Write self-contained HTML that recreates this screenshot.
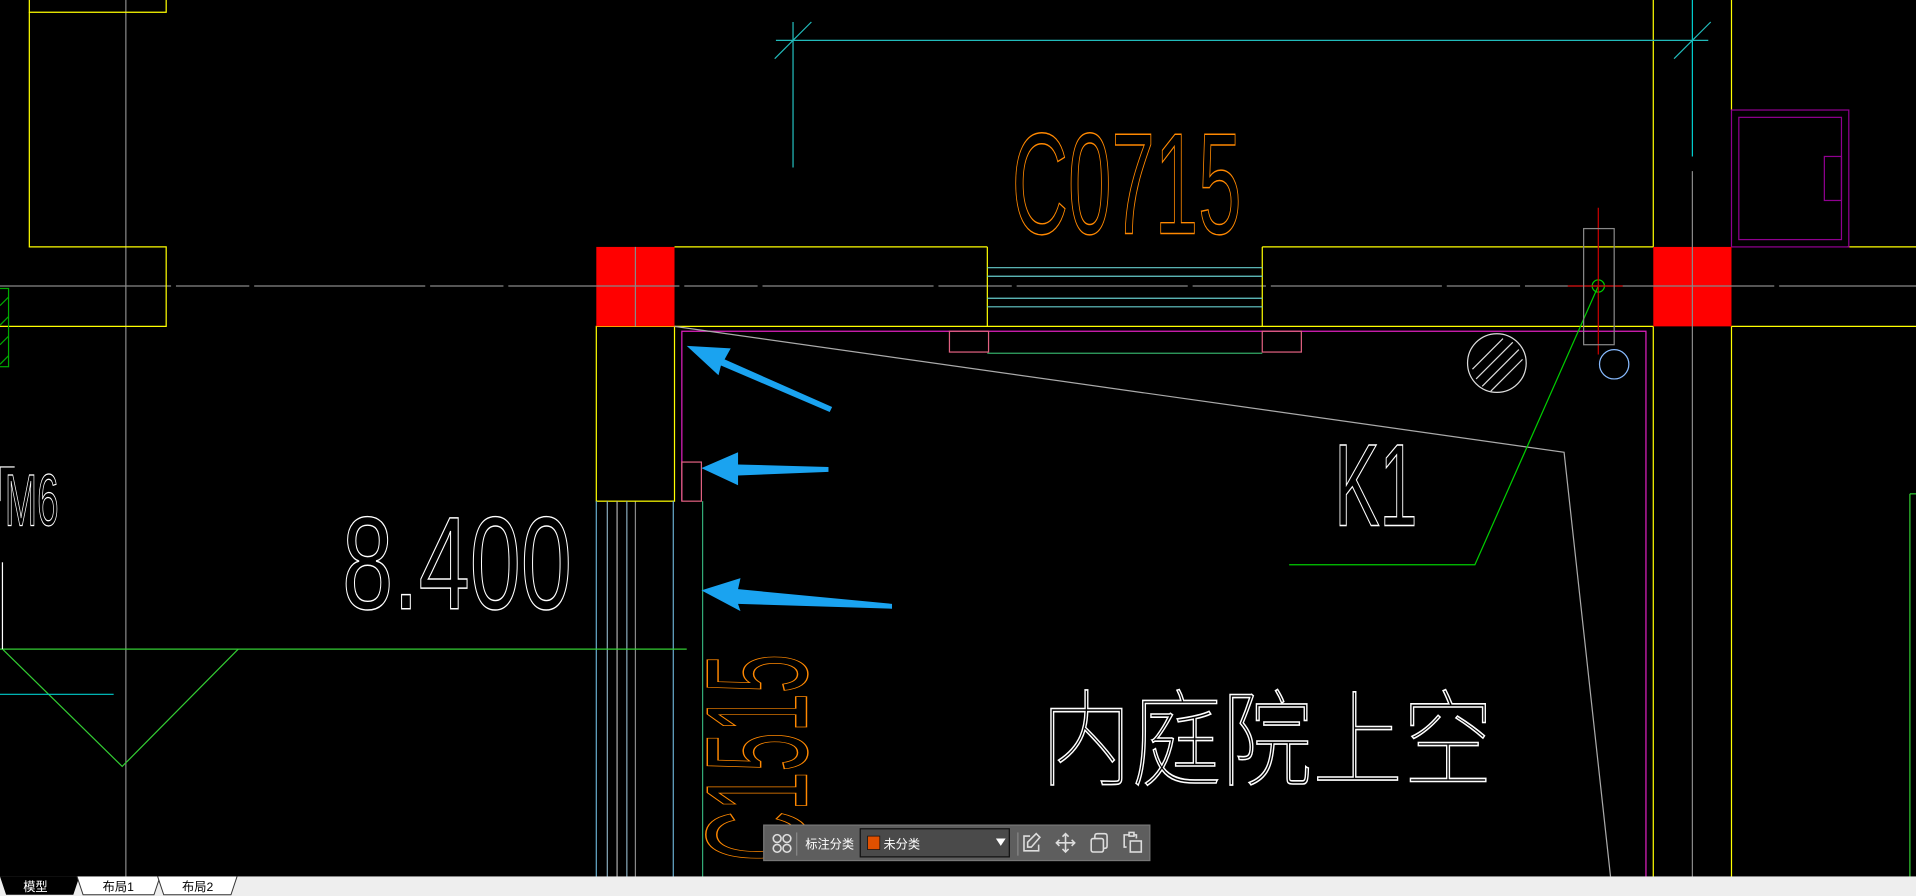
<!DOCTYPE html>
<html><head><meta charset="utf-8"><style>
html,body{margin:0;padding:0;background:#000;width:1916px;height:896px;overflow:hidden}
svg{display:block}
</style></head><body>
<svg width="1916" height="896" viewBox="0 0 1568 733" preserveAspectRatio="none" xmlns="http://www.w3.org/2000/svg">
<rect width="1568" height="733" fill="#000"/>
<g fill="none" stroke-width="1">
<line x1="103" y1="0" x2="103" y2="717" stroke="#888"/>
<line x1="0" y1="234" x2="1568" y2="234" stroke="#888" stroke-dasharray="140,4,60,4"/>
<line x1="520" y1="410" x2="520" y2="717" stroke="#888"/>
<line x1="1385" y1="140" x2="1385" y2="717" stroke="#888"/>
<polyline points="24,0 24,10 136,10 136,0" stroke="#ff0"/>
<polyline points="24,10 24,202 136,202 136,267 0,267" stroke="#ff0"/>
<line x1="552" y1="202" x2="808" y2="202" stroke="#ff0"/>
<line x1="1033" y1="202" x2="1353" y2="202" stroke="#ff0"/>
<line x1="552" y1="267" x2="1353" y2="267" stroke="#ff0"/>
<line x1="808" y1="202" x2="808" y2="267" stroke="#ff0"/>
<line x1="1033" y1="202" x2="1033" y2="267" stroke="#ff0"/>
<line x1="1353" y1="0" x2="1353" y2="202" stroke="#ff0"/>
<line x1="1417" y1="0" x2="1417" y2="90" stroke="#ff0"/>
<line x1="1353" y1="267" x2="1353" y2="717" stroke="#ff0"/>
<line x1="1417" y1="267" x2="1417" y2="717" stroke="#ff0"/>
<line x1="1512" y1="202" x2="1568" y2="202" stroke="#ff0"/>
<line x1="1417" y1="267" x2="1568" y2="267" stroke="#ff0"/>
<rect x="488" y="267" width="64" height="143" stroke="#ff0"/>
<line x1="808" y1="219" x2="1033" y2="219" stroke="#6cc"/>
<line x1="808" y1="226" x2="1033" y2="226" stroke="#6cc"/>
<line x1="808" y1="244" x2="1033" y2="244" stroke="#6cc"/>
<line x1="808" y1="251" x2="1033" y2="251" stroke="#6cc"/>
<line x1="808" y1="289" x2="1033" y2="289" stroke="#3a6"/>
<line x1="649" y1="18" x2="649" y2="137" stroke="#2bb"/>
<line x1="1385" y1="0" x2="1385" y2="128" stroke="#0cc"/>
<line x1="635" y1="33" x2="1398" y2="33" stroke="#2bb"/>
<line x1="634" y1="48" x2="664" y2="18" stroke="#2bb"/>
<line x1="1370" y1="48" x2="1400" y2="18" stroke="#2bb"/>
<polyline points="558,410 558,271 1347,271 1347,717" stroke="#e020c0"/>
<rect x="777" y="271" width="32" height="17" stroke="#e06080"/>
<rect x="1033" y="271" width="32" height="17" stroke="#e06080"/>
<rect x="558" y="378" width="16" height="32" stroke="#e06080"/>
<rect x="1417" y="90" width="96" height="112" stroke="#900090"/>
<rect x="1423" y="96" width="84" height="100" stroke="#900090"/>
<rect x="1493" y="128" width="14" height="36" stroke="#900090"/>
<line x1="488" y1="410" x2="488" y2="717" stroke="#6ac"/>
<line x1="497" y1="410" x2="497" y2="717" stroke="#8ab"/>
<line x1="505" y1="410" x2="505" y2="717" stroke="#aaa"/>
<line x1="513" y1="410" x2="513" y2="717" stroke="#8ab"/>
<line x1="551" y1="410" x2="551" y2="717" stroke="#6ac"/>
<line x1="575" y1="410" x2="575" y2="717" stroke="#3a7"/>
<line x1="1563" y1="404" x2="1563" y2="717" stroke="#3c3"/>
<line x1="1563" y1="404" x2="1568" y2="404" stroke="#3c3"/>
<polyline points="552,267 1280,370 1318,717" stroke="#aaa"/>
<polyline points="1308,234 1207,462 1055,462" stroke="#0c0"/>
<circle cx="1308" cy="234" r="5" stroke="#0c0"/>
<line x1="1308" y1="170" x2="1308" y2="290" stroke="#c00"/>
<line x1="1283" y1="234" x2="1328" y2="234" stroke="#c00"/>
<rect x="1296" y="187" width="25" height="95" stroke="#888"/>
<circle cx="1321" cy="298" r="12" stroke="#8bf"/>
<circle cx="1225" cy="297" r="24" stroke="#ddd"/>
<g stroke="#ddd"><line x1="1208" y1="310" x2="1238" y2="280"/><line x1="1213" y1="316" x2="1243" y2="286"/><line x1="1220" y1="320" x2="1246" y2="294"/><line x1="1205" y1="302" x2="1230" y2="277"/></g>
<polyline points="0,531 562,531" stroke="#3c3"/>
<polyline points="2,531 100,627 195,531" stroke="#3c3"/>
<line x1="0" y1="568" x2="93" y2="568" stroke="#0cc"/>
<line x1="2" y1="460" x2="2" y2="531" stroke="#fff"/>
<line x1="0" y1="382" x2="12" y2="382" stroke="#fff"/>
<line x1="0" y1="382" x2="0" y2="410" stroke="#fff"/>
<g stroke="#0a0"><rect x="-2" y="236" width="9" height="64"/><line x1="0" y1="250" x2="7" y2="243"/><line x1="0" y1="266" x2="7" y2="259"/><line x1="0" y1="282" x2="7" y2="275"/><line x1="0" y1="298" x2="7" y2="291"/></g>
</g>
<rect x="488" y="202" width="64" height="65" fill="#f00"/>
<rect x="1353" y="202" width="64" height="65" fill="#f00"/>
<line x1="520" y1="202" x2="520" y2="267" stroke="#888"/>
<line x1="1385" y1="202" x2="1385" y2="267" stroke="#888"/>
<line x1="488" y1="234" x2="552" y2="234" stroke="#888"/>
<line x1="1353" y1="234" x2="1417" y2="234" stroke="#888"/>
<g fill="#1aa3f0">
<polygon points="562,283 598,285 593,294 681,333 679,337 590,299 588,307"/>
<polygon points="574,383 604,370 604,380 678,382 678,386 604,389 604,397"/>
<polygon points="574,483 606,473 604,482 730,494 730,498 604,494 606,500"/>
</g>
<g font-family="Liberation Sans, sans-serif">
<text x="828" y="191" font-size="118" fill="none" stroke="#f80" stroke-width="1.2" textLength="188" lengthAdjust="spacingAndGlyphs">C0715</text>
<text x="280" y="498" font-size="108" fill="none" stroke="#fff" stroke-width="1.2" textLength="188" lengthAdjust="spacingAndGlyphs">8.400</text>
<text x="1092" y="430" font-size="96" fill="none" stroke="#fff" stroke-width="1.2" textLength="68" lengthAdjust="spacingAndGlyphs">K1</text>
<text x="4" y="430" font-size="60" fill="none" stroke="#fff" stroke-width="1" textLength="44" lengthAdjust="spacingAndGlyphs">M6</text>
<text x="0" y="0" font-size="118" fill="none" stroke="#f80" stroke-width="1.2" transform="translate(660,705) rotate(-90)" textLength="170" lengthAdjust="spacingAndGlyphs">C1515</text>
</g>
<text x="852" y="636" font-family="Noto Sans CJK SC, sans-serif" font-weight="100" font-size="86" fill="none" stroke="#fff" stroke-width="1.3" textLength="370" lengthAdjust="spacingAndGlyphs">内庭院上空</text>
<rect x="625" y="675" width="316" height="29" fill="#5e5e5e" stroke="#777"/>
<g fill="none" stroke="#ddd" stroke-width="1.3">
<circle cx="636" cy="686" r="3.2"/><circle cx="644" cy="686" r="3.2"/><circle cx="636" cy="694" r="3.2"/><circle cx="644" cy="694" r="3.2"/>
</g>
<line x1="652" y1="681" x2="652" y2="700" stroke="#888"/>
<text x="659" y="694" font-family="Liberation Sans, Noto Sans CJK SC, sans-serif" font-size="10" fill="#fff">标注分类</text>
<rect x="704" y="678" width="122" height="23" fill="#4a4a4a" stroke="#111"/>
<rect x="710" y="684" width="10" height="11" fill="#e05000" stroke="#111" stroke-width="0.6"/>
<text x="723" y="694" font-family="Liberation Sans, Noto Sans CJK SC, sans-serif" font-size="10" fill="#fff">未分类</text>
<polygon points="815,686 823,686 819,692" fill="#fff"/>
<line x1="833" y1="681" x2="833" y2="700" stroke="#888"/>
<g fill="none" stroke="#ddd" stroke-width="1.3">
<path d="M843 684 H838 V696 H850 V691 M841 693 L841 689 L848 682 L851 685 L844 693 Z"/>
<path d="M872 682 V697 M864.5 689.5 H879.5 M869.5 684.5 L872 682 L874.5 684.5 M869.5 694.5 L872 697 L874.5 694.5 M867 687 L864.5 689.5 L867 692 M877 687 L879.5 689.5 L877 692"/>
<rect x="893" y="686" width="10" height="11" rx="1.5"/><path d="M896 686 V684 Q896 682 898 682 H904 Q906 682 906 684 V692 Q906 694 904 694 H903"/>
<path d="M922 693 H920 V683 H924 M930 686 V683 H928"/><rect x="924" y="681" width="4" height="3"/><rect x="925" y="688" width="9" height="9"/>
</g>
<rect x="0" y="717" width="1568" height="16" fill="#eeeeee"/>
<path d="M0 717 L5 732 H60 L65 717 Z" fill="#000"/>
<path d="M63 717 L68 732 H126 L131 717" fill="#fff" stroke="#333" stroke-width="0.8"/>
<path d="M129 717 L134 732 H189 L194 717" fill="#fff" stroke="#333" stroke-width="0.8"/>
<g font-family="Liberation Sans, Noto Sans CJK SC, sans-serif" font-size="10">
<text x="19" y="729" fill="#fff">模型</text>
<text x="84" y="729" fill="#000">布局1</text>
<text x="149" y="729" fill="#000">布局2</text>
</g>
</svg>
</body></html>
